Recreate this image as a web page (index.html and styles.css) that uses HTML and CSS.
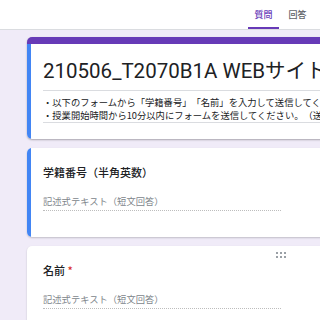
FILE: index.html
```html
<!DOCTYPE html>
<html lang="ja">
<head>
    <meta charset="UTF-8">
    <meta name="viewport" content="width=device-width, initial-scale=1.0">
    <title>210506_T2070B1A WEBサイト</title>
    <link rel="stylesheet" href="styles.css">
</head>
<body>

    <header class="topbar">
        <nav class="tabs">
            <a class="tab active">質問</a>
            <a class="tab">回答</a>
        </nav>
    </header>

    <main class="form">
        <!-- En-tête du formulaire -->
        <section class="card title-card">
            <div class="card-inner">
                <h1 class="form-title">210506_T2070B1A WEBサイト制作 出席確認</h1>
                <div class="form-desc">
                    <p>・以下のフォームから「学籍番号」「名前」を入力して送信してください。</p>
                    <p>・授業開始時間から10分以内にフォームを送信してください。（送信後の修正はできません）</p>
                </div>
            </div>
        </section>

        <!-- Questions -->
        <section class="card question active">
            <div class="card-inner">
                <div class="q-title">学籍番号（半角英数）</div>
                <div class="q-answer">記述式テキスト（短文回答）</div>
            </div>
        </section>

        <section class="card question">
            <span class="drag-handle">
                <svg width="10" height="6" viewBox="0 0 10 6">
                    <rect x="0" y="0" width="2" height="2" fill="#9aa0a6"/>
                    <rect x="4" y="0" width="2" height="2" fill="#9aa0a6"/>
                    <rect x="8" y="0" width="2" height="2" fill="#9aa0a6"/>
                    <rect x="0" y="4" width="2" height="2" fill="#9aa0a6"/>
                    <rect x="4" y="4" width="2" height="2" fill="#9aa0a6"/>
                    <rect x="8" y="4" width="2" height="2" fill="#9aa0a6"/>
                </svg>
            </span>
            <div class="card-inner">
                <div class="q-title">名前 <span class="required">*</span></div>
                <div class="q-answer">記述式テキスト（短文回答）</div>
            </div>
        </section>
    </main>

</body>
</html>
```

FILE: styles.css
```css
body {
    font-family: Roboto, "Noto Sans CJK JP", sans-serif;
    margin: 0;
    padding: 0;
    background-color: #f0ebf8;
    color: #202124;
    overflow: hidden;
    text-spacing-trim: space-all;
}
.topbar {
    height: 29px;
    background: #fff;
    border-bottom: 1px solid #dadce0;
    display: flex;
    justify-content: flex-end;
    padding-right: 7px;
}
.tabs {
    display: flex;
    gap: 3px;
}
.tab {
    width: 31px;
    height: 26px;
    padding-top: 1px;
    display: flex;
    align-items: center;
    justify-content: center;
    font-size: 9px;
    font-weight: 500;
    color: #5f6368;
    border-bottom: 2px solid transparent;
}
.tab.active {
    color: #673ab7;
    border-bottom-color: #673ab7;
}
.form {
    padding: 7px 0 0 27px;
    display: flex;
    flex-direction: column;
    gap: 9px;
}
.card {
    position: relative;
    width: 507px;
    background: #fff;
    border-radius: 5px;
    box-shadow: 0 1px 2px rgba(0, 0, 0, 0.2);
    overflow: hidden;
}
.card-inner {
    padding: 16px 16px 26px 16px;
}
.card.active .card-inner,
.title-card .card-inner {
    border-left: 4px solid #4285f4;
    padding-left: 12px;
}
.title-card {
    border-top: 7px solid #673ab7;
    box-shadow: 0 1px 2px rgba(0, 0, 0, 0.3);
}
.title-card .card-inner {
    padding-top: 14px;
    padding-bottom: 16px;
}
.form-title {
    margin: 0;
    font-size: 20.5px;
    font-weight: 400;
    line-height: 26px;
    padding-bottom: 6px;
    border-bottom: 1px solid #dadce0;
    white-space: nowrap;
}
.form-desc {
    padding-top: 5px;
    border-bottom: 1px solid #dadce0;
}
.form-desc p {
    margin: 0;
    font-family: "Noto Sans CJK JP", sans-serif;
    font-size: 9.3px;
    line-height: 13px;
    white-space: nowrap;
}
.q-title {
    font-family: "Noto Sans CJK JP", sans-serif;
    font-size: 11px;
    font-weight: 500;
    line-height: 16px;
}
.required {
    color: #d93025;
}
.q-answer {
    width: 238px;
    margin-top: 14px;
    font-family: "Noto Sans CJK JP", sans-serif;
    font-size: 9.3px;
    line-height: 15px;
    color: #80868b;
    border-bottom: 1px dotted #bdbdbd;
    padding-bottom: 1px;
}
.drag-handle {
    position: absolute;
    top: 6px;
    left: 249px;
    display: flex;
}
```
